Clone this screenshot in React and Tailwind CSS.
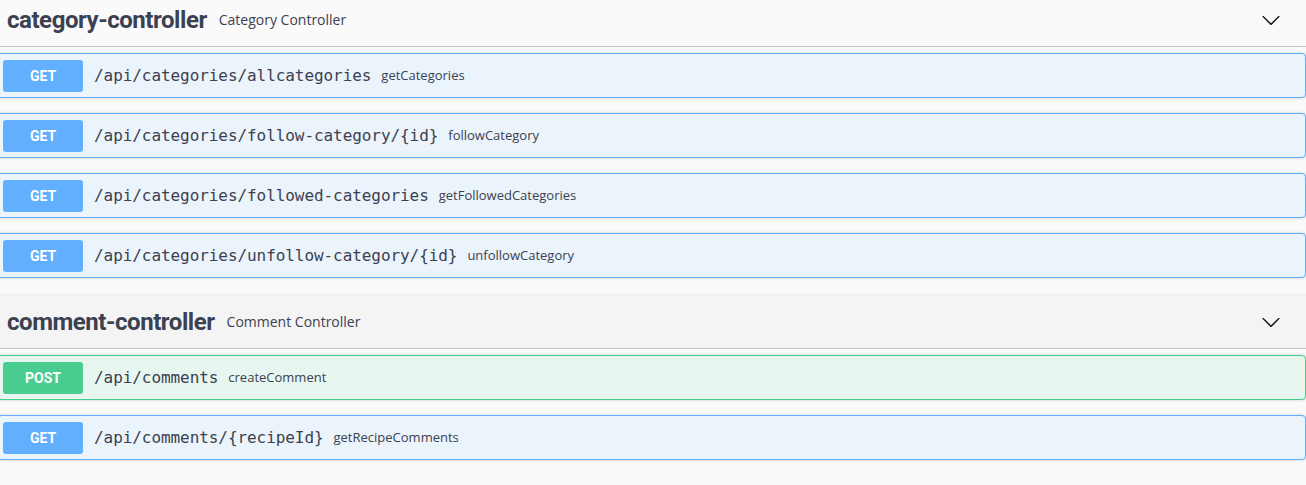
const groups = [
  {
    name: "category-controller",
    desc: "Category Controller",
    hover: false,
    ops: [
      { method: "GET", path: "/api/categories/allcategories", summary: "getCategories" },
      { method: "GET", path: "/api/categories/follow-category/{id}", summary: "followCategory" },
      { method: "GET", path: "/api/categories/followed-categories", summary: "getFollowedCategories" },
      { method: "GET", path: "/api/categories/unfollow-category/{id}", summary: "unfollowCategory" },
    ],
  },
  {
    name: "comment-controller",
    desc: "Comment Controller",
    hover: true,
    ops: [
      { method: "POST", path: "/api/comments", summary: "createComment" },
      { method: "GET", path: "/api/comments/{recipeId}", summary: "getRecipeComments" },
    ],
  },
];

const styles = {
  GET: { row: "bg-[#ebf3fb] border-[#61affe]", badge: "bg-[#61affe]" },
  POST: { row: "bg-[#e8f6f0] border-[#49cc90]", badge: "bg-[#49cc90]" },
};

function Chevron() {
  return (
    <svg width="20" height="20" viewBox="0 0 20 20" className="text-[#1b1b1b]">
      <path
        fill="currentColor"
        d="M17.418 6.109c.272-.268.709-.268.979 0s.271.701 0 .969l-7.908 7.83c-.27.268-.707.268-.979 0l-7.908-7.83c-.27-.268-.27-.701 0-.969.271-.268.709-.268.979 0L10 13.25l7.418-7.141z"
      />
    </svg>
  );
}

function Operation({ op }) {
  const s = styles[op.method];
  return (
    <div
      className={`mb-[15px] flex h-[45px] items-center rounded border pl-[5px] shadow-[0_0_3px_rgba(0,0,0,0.19)] ${s.row}`}
    >
      <span
        className={`flex h-[32px] w-[80px] items-center justify-center rounded-[3px] pt-px font-['Roboto',sans-serif] text-[14px] font-bold text-white ${s.badge}`}
      >
        {op.method}
      </span>
      <span className="ml-[11px] pt-px font-['DejaVu_Sans_Mono',monospace] text-[16px] tracking-[-0.07px] text-[#3b4151]">
        {op.path}
      </span>
      <span className="ml-[10px] pt-px font-['Open_Sans',sans-serif] text-[13px] text-[#3b4151]">
        {op.summary}
      </span>
    </div>
  );
}

function Group({ group }) {
  return (
    <section>
      <div
        className={`mb-[6px] flex h-[56px] items-center border-b border-[#c4c6cb] pl-[10px] pr-[25px] pt-[2px] ${
          group.hover ? "bg-[#f4f4f4]" : ""
        }`}
      >
        <h3 className="font-['Roboto',sans-serif] text-[24px] font-bold tracking-[-0.45px] text-[#3b4151]">
          {group.name}
        </h3>
        <span className="ml-3 font-['Open_Sans',sans-serif] text-[14px] text-[#3b4151]">
          {group.desc}
        </span>
        <span className="ml-auto flex">
          <Chevron />
        </span>
      </div>
      {group.ops.map((op) => (
        <Operation key={op.path} op={op} />
      ))}
    </section>
  );
}

export default function App() {
  return (
    <div className="h-[485px] overflow-hidden bg-[#fafafa]">
      <div className="-mt-[9px] -ml-[3px] w-[1309px]">
        {groups.map((g) => (
          <Group key={g.name} group={g} />
        ))}
      </div>
    </div>
  );
}
